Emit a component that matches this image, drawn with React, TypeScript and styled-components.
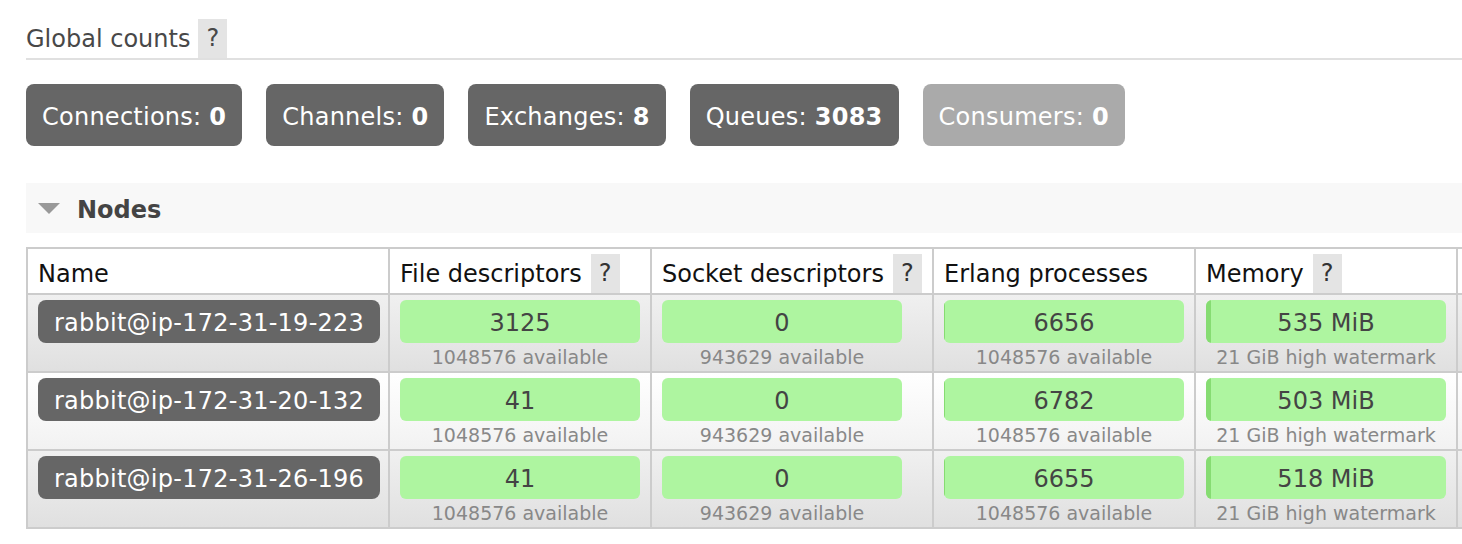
import React from 'react';
import styled, { createGlobalStyle } from 'styled-components';

const GlobalStyle = createGlobalStyle`
  * { box-sizing: border-box; }
  html, body {
    margin: 0;
    padding: 0;
    overflow: hidden;
    background: #fff;
    font-family: 'DejaVu Sans', Verdana, sans-serif;
    color: #484848;
  }
`;

const counts = [
  { label: 'Connections', value: 0, dim: false },
  { label: 'Channels', value: 0, dim: false },
  { label: 'Exchanges', value: 8, dim: false },
  { label: 'Queues', value: 3083, dim: false },
  { label: 'Consumers', value: 0, dim: true },
];

const nodes = [
  { name: 'rabbit@ip-172-31-19-223', fd: 3125, sockets: 0, procs: 6656, mem: 535, disk: 38 },
  { name: 'rabbit@ip-172-31-20-132', fd: 41, sockets: 0, procs: 6782, mem: 503, disk: 38 },
  { name: 'rabbit@ip-172-31-26-196', fd: 41, sockets: 0, procs: 6655, mem: 518, disk: 38 },
];

const BAR_WIDTH = 240;
const FD_TOTAL = 1048576;
const SOCKET_TOTAL = 943629;
const PROC_TOTAL = 1048576;
const MEM_WATERMARK = 21 * 1024;

export default function App() {
  return (
    <>
      <GlobalStyle />
      <Page>
        <SectionTitle>
          <span>Global counts</span>
          <Help>?</Help>
        </SectionTitle>

        <Counts>
          {counts.map((c) => (
            <CountBox key={c.label} dim={c.dim}>
              {c.label}: <b>{c.value}</b>
            </CountBox>
          ))}
        </Counts>

        <Section>
          <Triangle />
          Nodes
        </Section>

        <Table>
          <colgroup>
            <col style={{ width: 362 }} />
            <col style={{ width: 262 }} />
            <col style={{ width: 282 }} />
            <col style={{ width: 262 }} />
            <col style={{ width: 262 }} />
            <col style={{ width: 262 }} />
          </colgroup>
          <thead>
            <tr>
              <Th>
                <HeadInner>Name</HeadInner>
              </Th>
              <Th>
                <HeadInner>
                  File descriptors <HeadHelp>?</HeadHelp>
                </HeadInner>
              </Th>
              <Th>
                <HeadInner>
                  Socket descriptors <HeadHelp>?</HeadHelp>
                </HeadInner>
              </Th>
              <Th>
                <HeadInner>Erlang processes</HeadInner>
              </Th>
              <Th>
                <HeadInner>
                  Memory <HeadHelp>?</HeadHelp>
                </HeadInner>
              </Th>
              <Th />
            </tr>
          </thead>
          <tbody>
            {nodes.map((n, idx) => (
              <Row key={n.name} alt={idx % 2 === 0}>
                <Td>
                  <NodePill>{n.name}</NodePill>
                </Td>
                <Td>
                  <StatusBar value={String(n.fd)} ratio={n.fd / FD_TOTAL} sub="1048576 available" />
                </Td>
                <Td>
                  <StatusBar value={String(n.sockets)} ratio={n.sockets / SOCKET_TOTAL} sub="943629 available" />
                </Td>
                <Td>
                  <StatusBar value={String(n.procs)} ratio={n.procs / PROC_TOTAL} sub="1048576 available" />
                </Td>
                <Td>
                  <StatusBar value={`${n.mem} MiB`} ratio={n.mem / MEM_WATERMARK} sub="21 GiB high watermark" />
                </Td>
                <Td />
              </Row>
            ))}
          </tbody>
        </Table>
      </Page>
    </>
  );
}

function StatusBar({ value, ratio, sub }: { value: string; ratio: number; sub: string }) {
  // used part of the bar, drawn darker
  const used = Math.floor(Math.min(ratio, 1) * BAR_WIDTH);
  return (
    <BarWrap>
      <Bar>
        <BarFill style={{ width: used }} />
        <BarText>{value}</BarText>
      </Bar>
      <Sub>{sub}</Sub>
    </BarWrap>
  );
}

const Page = styled.div`
  padding: 19px 0 0 26px;
`;

const SectionTitle = styled.div`
  display: flex;
  align-items: center;
  gap: 8px;
  height: 41px;
  border-bottom: 2px solid #e0e0e0;
  font-size: 24px;
  color: #484848;
`;

const Help = styled.span`
  display: inline-block;
  width: 29px;
  height: 39px;
  line-height: 39px;
  text-align: center;
  background: #e4e4e4;
  color: #484848;
  font-size: 24px;
  align-self: flex-start;
`;

const Counts = styled.div`
  display: flex;
  gap: 24px;
  margin-top: 24px;
`;

const CountBox = styled.div<{ dim: boolean }>`
  height: 62px;
  line-height: 62px;
  padding: 2px 16px 0;
  border-radius: 8px;
  background: ${(p) => (p.dim ? '#aaa' : '#666')};
  color: #fff;
  font-size: 24px;
  letter-spacing: 0.25px;
  white-space: nowrap;

  b {
    font-weight: bold;
  }
`;

const Section = styled.div`
  display: flex;
  align-items: center;
  height: 50px;
  margin-top: 37px;
  padding: 3px 0 0 12px;
  background: #f8f8f8;
  font-size: 24px;
  font-weight: bold;
  color: #444;
`;

const Triangle = styled.span`
  width: 0;
  height: 0;
  margin-top: -3px;
  border-left: 11px solid transparent;
  border-right: 11px solid transparent;
  border-top: 11px solid #999;
  margin-right: 17px;
`;

const Table = styled.table`
  margin-top: 14px;
  table-layout: fixed;
  width: 1692px;
  border-collapse: separate;
  border-spacing: 0;
  border-top: 2px solid #ccc;
  border-left: 2px solid #ccc;
`;

const Th = styled.th`
  height: 46px;
  padding: 5px 10px 0 10px;
  vertical-align: top;
  text-align: left;
  font-weight: normal;
  font-size: 24px;
  color: #111;
  background: #fff;
  border-right: 2px solid #ccc;
  border-bottom: 2px solid #ccc;
  white-space: nowrap;
`;

const HeadInner = styled.div`
  display: flex;
  align-items: center;
  gap: 9px;
  height: 39px;
`;

const HeadHelp = styled.span`
  display: inline-block;
  width: 29px;
  height: 39px;
  line-height: 39px;
  text-align: center;
  background: #e4e4e4;
  color: #333;
`;

const Row = styled.tr<{ alt: boolean }>`
  td {
    background: ${(p) =>
      p.alt ? 'linear-gradient(#f0f0f0, #e0e0e0)' : 'linear-gradient(#ffffff, #f2f2f2)'};
  }
`;

const Td = styled.td`
  height: 78px;
  padding: 5px 10px 0 10px;
  vertical-align: top;
  border-right: 2px solid #ccc;
  border-bottom: 2px solid #ccc;
`;

const NodePill = styled.span`
  display: inline-block;
  height: 43px;
  line-height: 43px;
  padding: 2px 16px 0;
  border-radius: 8px;
  background: #666;
  color: #fff;
  font-size: 24px;
  letter-spacing: 0.25px;
  white-space: nowrap;
`;

const BarWrap = styled.div`
  width: ${BAR_WIDTH}px;
`;

const Bar = styled.div`
  position: relative;
  height: 43px;
  border-radius: 6px;
  overflow: hidden;
  background: #aef5a0;
`;

const BarFill = styled.div`
  position: absolute;
  left: 0;
  top: 0;
  bottom: 0;
  background: #86dc72;
`;

const BarText = styled.div`
  position: relative;
  padding-top: 2px;
  line-height: 43px;
  text-align: center;
  font-size: 24px;
  color: #444;
`;

const Sub = styled.div`
  padding-top: 2px;
  line-height: 24px;
  text-align: center;
  font-size: 19px;
  color: #888;
  white-space: nowrap;
`;
